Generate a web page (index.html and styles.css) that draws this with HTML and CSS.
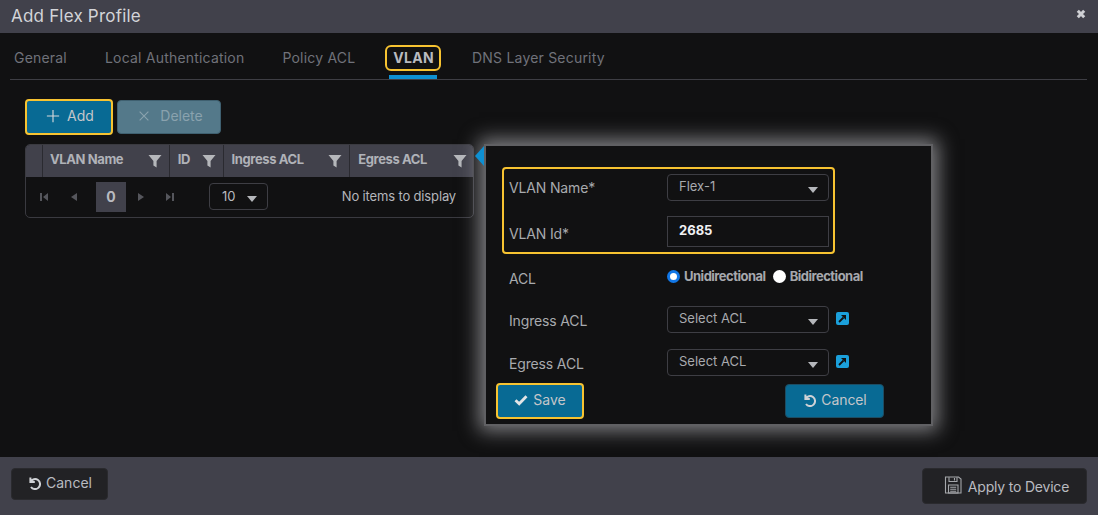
FILE: index.html
```html
<!DOCTYPE html>
<html lang="en">
<head>
<meta charset="utf-8">
<title>Add Flex Profile</title>
<link rel="stylesheet" href="styles.css">
</head>
<body>
<div class="app">
  <header class="titlebar">
    <h1>Add Flex Profile</h1>
    <svg class="close" viewBox="0 0 10 10"><path d="M1.8 1.8 8.2 8.2M8.2 1.8 1.8 8.2"/></svg>
  </header>
  <main class="content">
    <nav class="tabs">
      <span class="tab">General</span>
      <span class="tab">Local Authentication</span>
      <span class="tab">Policy ACL</span>
      <span class="tab active">VLAN</span>
      <span class="tab">DNS Layer Security</span>
    </nav>
    <div class="toolbar">
      <button class="btn primary focus add"><svg class="ico-line" viewBox="0 0 16 16"><path d="M8 1v14M1 8h14"/></svg><span>Add</span></button>
      <button class="btn disabled del"><svg class="ico-line" viewBox="0 0 16 16"><path d="M3 3l10 10M13 3 3 13"/></svg><span>Delete</span></button>
    </div>
    <section class="grid">
      <div class="grid-head">
        <div class="col c0"></div>
        <div class="col c1"><span>VLAN Name</span><svg class="funnel" viewBox="0 0 14 14"><path d="M0.5 1h13L8.6 7v6.5L5.4 11.5V7z"/></svg></div>
        <div class="col c2"><span>ID</span><svg class="funnel" viewBox="0 0 14 14"><path d="M0.5 1h13L8.6 7v6.5L5.4 11.5V7z"/></svg></div>
        <div class="col c3"><span>Ingress ACL</span><svg class="funnel" viewBox="0 0 14 14"><path d="M0.5 1h13L8.6 7v6.5L5.4 11.5V7z"/></svg></div>
        <div class="col c4"><span>Egress ACL</span><svg class="funnel" viewBox="0 0 14 14"><path d="M0.5 1h13L8.6 7v6.5L5.4 11.5V7z"/></svg></div>
      </div>
      <div class="pager">
        <svg class="pg first" viewBox="0 0 10 10"><path d="M1 1h2v8H1zM9 1v8L4 5z"/></svg>
        <svg class="pg prev" viewBox="0 0 10 10"><path d="M8 1v8L2 5z"/></svg>
        <span class="page-no">0</span>
        <svg class="pg next" viewBox="0 0 10 10"><path d="M2 1v8l6-4z"/></svg>
        <svg class="pg last" viewBox="0 0 10 10"><path d="M1 1v8l5-4zM7 1h2v8H7z"/></svg>
        <span class="page-size">10<i class="caret"></i></span>
        <span class="no-items">No items to display</span>
      </div>
    </section>
    <section class="popover">
      <i class="pointer"></i>
      <div class="highlight">
        <div class="row r-first"><label>VLAN Name*</label><span class="select">Flex-1<i class="caret"></i></span></div>
        <div class="row r-second"><label>VLAN Id*</label><span class="input">2685</span></div>
      </div>
      <div class="row r-acl"><label>ACL</label>
        <span class="radios">
          <span class="radio checked"></span><b>Unidirectional</b>
          <span class="radio"></span><b>Bidirectional</b>
        </span>
      </div>
      <div class="row r-ingress"><label>Ingress ACL</label><span class="select">Select ACL<i class="caret"></i></span><svg class="ext" viewBox="0 0 13 13"><rect width="13" height="13" rx="2"/><path d="M3 10 7.5 5.5"/><path class="tip" d="M5 3h5v5z"/></svg></div>
      <div class="row r-egress"><label>Egress ACL</label><span class="select">Select ACL<i class="caret"></i></span><svg class="ext" viewBox="0 0 13 13"><rect width="13" height="13" rx="2"/><path d="M3 10 7.5 5.5"/><path class="tip" d="M5 3h5v5z"/></svg></div>
      <div class="actions">
        <button class="btn primary focus save"><svg class="check" viewBox="0 0 14 12"><path d="M1.5 6.2 5.2 9.8 12.5 2.2"/></svg><span>Save</span></button>
        <button class="btn primary cancel-inner"><svg class="undo" viewBox="0 0 14 14"><path d="M3.4 1.6v4.4h4.4M3.6 5.8A5 5 0 1 1 4 11"/></svg><span>Cancel</span></button>
      </div>
    </section>
  </main>
  <footer class="footer">
    <button class="btn dark f-cancel"><svg class="undo" viewBox="0 0 14 14"><path d="M3.4 1.6v4.4h4.4M3.6 5.8A5 5 0 1 1 4 11"/></svg><span>Cancel</span></button>
    <button class="btn dark f-apply"><svg class="floppy" viewBox="0 0 18 18"><path d="M1.5 1h13L17 3v14H1.5z"/><path d="M5 1.2v4.3h8V1.2M10.5 2v2.5"/><path d="M4.5 9h9.5v8H4.5zM6.2 11.3h6M6.2 13.3h6M6.2 15.2h6"/></svg><span>Apply to Device</span></button>
  </footer>
</div>
</body>
</html>
```
FILE: styles.css
```css
* { box-sizing: border-box; }
html, body { margin: 0; padding: 0; }
body { width: 1098px; height: 515px; overflow: hidden; background: #111112; font-family: Inter, "Liberation Sans", sans-serif; color: #b9bbc0; font-size: 14px; }
.app { display: flex; flex-direction: column; height: 515px; }
.titlebar { height: 33px; flex: none; background: #41414b; display: flex; align-items: center; justify-content: space-between; padding: 0 12px 2px 11px; }
.titlebar h1 { margin: 0; font-size: 17px; font-weight: 400; color: #d3d4d8; letter-spacing: 0.2px; }
.close { width: 10px; height: 10px; margin-top: -3px; }
.close path { stroke: #cfd0d4; stroke-width: 3; fill: none; }
.content { position: relative; flex: 1; padding: 12px 11px 0 10px; }
.tabs { display: flex; gap: 38px; height: 35px; padding-left: 4px; border-bottom: 1px solid #3e3e44; align-items: flex-start; }
.tab { position: relative; height: 26px; line-height: 26px; color: #70727a; font-size: 14px; letter-spacing: 0.2px; }
.tab.active { color: #b9bbc0; font-weight: 700; letter-spacing: 0.3px; }
.tab.active::before { content: ""; position: absolute; left: -8px; right: -7px; top: 0; bottom: 0; border: 2px solid #f7c331; border-radius: 6px; }
.tab.active::after { content: ""; position: absolute; left: -4px; right: -3px; top: 30px; height: 4px; background: #0e90d2; }
.toolbar { display: flex; gap: 4px; align-items: center; margin: 19px 0 9px 15px; height: 36px; }
.btn { display: inline-flex; align-items: center; justify-content: center; font: inherit; font-size: 14px; border: 1px solid transparent; border-radius: 4px; padding: 0; color: #c4c6ca; }
.btn span { position: relative; top: -2px; }
.btn svg { position: relative; top: -1px; }
.primary { background: #086a94; border-color: #1d4d63; }
.focus { border: 2px solid #f7c331; }
.add { width: 88px; height: 36px; gap: 7px; padding-left: 2px; }
.del { width: 104px; height: 34px; gap: 9px; background: #54798a; border-color: #3f6070; color: #8aa2ae; padding-left: 2px; }
.ico-line { width: 14px; height: 14px; }
.ico-line path { stroke: currentColor; stroke-width: 1.3; fill: none; }
.add .ico-line { color: #d6d8da; }
.grid { width: 449px; margin-left: 15px; height: 74px; border: 1px solid #3a3a40; border-radius: 5px; overflow: hidden; }
.grid-head { display: flex; height: 33px; background: #41414b; margin: -1px -1px 0; }
.col { display: flex; align-items: center; justify-content: space-between; border-right: 1px solid #2a2a30; padding: 0 7px 0 8px; color: #b0b2b8; font-size: 13px; font-weight: 700; letter-spacing: -0.4px; }
.col span { position: relative; top: -2px; }
.c0 { width: 18px; }
.c1 { width: 127px; padding-left: 7px; }
.c2 { width: 54px; }
.c3 { width: 127px; }
.c4 { width: 124px; border-right: 0; }
.funnel { width: 14px; height: 14px; flex: none; }
.funnel path { fill: #b5b7bb; }
.pager { display: flex; align-items: center; height: 40px; position: relative; }
.pg { width: 10px; height: 10px; flex: none; }
.pg path { fill: #55565c; }
.first { margin-left: 13px; }
.prev { margin-left: 20px; }
.page-no { width: 30px; height: 30px; margin-left: 17px; background: #41414b; color: #b9bbc0; font-weight: 700; display: flex; align-items: center; justify-content: center; padding-bottom: 2px; }
.next { margin-left: 10px; }
.last { margin-left: 19px; }
.page-size { width: 59px; height: 27px; margin: -1px 0 0 34px; border: 1px solid #3e3e44; border-radius: 4px; display: flex; align-items: center; padding: 0 0 2px 12px; position: relative; color: #b9bbc0; font-size: 13px; }
.caret { position: absolute; right: 10px; top: 12px; width: 0; height: 0; border: 5px solid transparent; border-top: 6px solid #b5b7bb; border-bottom: 0; }
.no-items { margin: -3px 17px 0 auto; color: #b4b6bb; font-size: 13px; letter-spacing: -0.15px; }
.popover { position: absolute; left: 484px; top: 111px; width: 449px; height: 282px; background: #111112; border: 2px solid #606063; box-shadow: 0 0 18px 5px rgba(200, 200, 205, 0.6); padding: 21px 0 0 16px; }
.pointer { position: absolute; left: -11px; top: 0; width: 0; height: 0; border: 10px solid transparent; border-left: 0; border-right: 9px solid #0e90d2; }
.highlight { width: 333px; height: 87px; border: 2px solid #f7c331; border-radius: 4px; padding: 5px 4px 0 5px; }
.row { display: flex; align-items: center; position: relative; }
.row label { width: 158px; color: #a8aaae; font-size: 14px; flex: none; letter-spacing: -0.15px; }
.select, .input { width: 162px; flex: none; display: flex; align-items: flex-start; position: relative; font-size: 13px; border: 1px solid #3e3e44; padding: 3px 11px; color: #a8aaae; }
.select { height: 27px; border-radius: 4px; }
.input { height: 31px; color: #f0f0f2; font-weight: 700; align-items: center; padding-top: 0; }
.r-first { height: 27px; }
.r-second { height: 31px; margin-top: 15px; }
.r-second label { margin-top: 3px; }
.r-acl { height: 27px; margin: 10px 0 0 7px; }
.r-ingress { height: 27px; margin: 15px 0 0 7px; }
.r-egress { height: 27px; margin: 16px 0 0 7px; }
.r-acl label { margin-top: 2px; }
.r-ingress label, .r-egress label { margin-top: 2px; }
.radios { display: flex; align-items: center; height: 27px; font-size: 13px; margin-top: -3px; }
.radios b { color: #a6a8ad; font-size: 13px; letter-spacing: -0.5px; margin: 0 7px 0 4px; }
.radio { width: 13px; height: 13px; border-radius: 50%; background: #fff; flex: none; }
.radio.checked { border: 3px solid #1277e6; }
.ext { width: 13px; height: 13px; margin-left: 7px; margin-top: -3px; flex: none; }
.ext rect { fill: #1ba0db; }
.ext path { stroke: #111; fill: none; stroke-width: 1.8; }
.ext .tip { fill: #111; stroke: none; }
.actions { display: flex; justify-content: space-between; align-items: center; margin: 7px 0 0 9px; width: 388px; position: relative; left: -15px; }
.save { width: 88px; height: 36px; gap: 5px; }
.cancel-inner { width: 99px; height: 34px; gap: 5px; letter-spacing: -0.1px; }
.check { width: 14px; height: 12px; }
.check path { stroke: #e2e4e6; stroke-width: 2.8; fill: none; }
.undo { width: 14px; height: 14px; flex: none; }
.undo path { stroke: #d0d2d6; stroke-width: 2; fill: none; }
.footer { height: 58px; flex: none; background: #41414b; display: flex; justify-content: space-between; align-items: flex-start; padding: 11px 11px 0; }
.dark { background: #222225; border-color: #2a2a2e; color: #b9bbc0; }
.f-cancel { width: 97px; height: 32px; gap: 5px; }
.f-apply { width: 165px; height: 36px; gap: 6px; letter-spacing: -0.2px; padding-left: 4px; }
.f-apply span { top: 0; }
.floppy { width: 18px; height: 18px; }
.floppy path { stroke: #a5a7ab; stroke-width: 1.1; fill: none; }
```
